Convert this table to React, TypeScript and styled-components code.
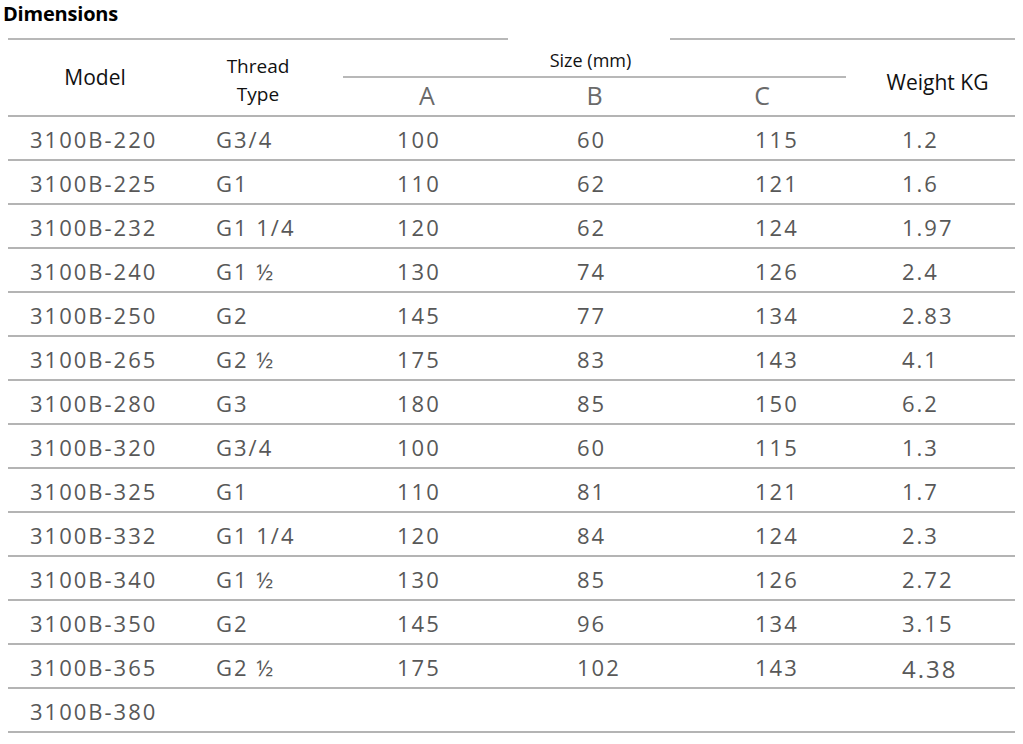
import React from "react";
import styled, { createGlobalStyle } from "styled-components";

const Global = createGlobalStyle`
  html, body { margin: 0; padding: 0; background: #fff; }
  body { font-family: "Open Sans", "Liberation Sans", sans-serif; }
`;

const Page = styled.div`
  width: 1023px;
  height: 744px;
  overflow: hidden;
  background: #fff;
`;

const Title = styled.h1`
  margin: 0;
  padding: 1px 0 0 3px;
  height: 38px;
  box-sizing: border-box;
  font-size: 20px;
  font-weight: 700;
  color: #000;
  line-height: 26px;
  letter-spacing: -0.2px;
`;

const Table = styled.div`
  margin-left: 8px;
  width: 1007px;
`;

const TopRule = styled.div`
  display: flex;
  height: 2px;
`;

const RuleSeg = styled.div<{ $w?: number; $clear?: boolean }>`
  height: 2px;
  ${(p) => (p.$w ? `width: ${p.$w}px;` : "flex: 1;")}
  background: ${(p) => (p.$clear ? "transparent" : "#b8b8b8")};
`;

const Header = styled.div`
  display: flex;
  height: 75px;
  border-bottom: 2px solid #b4b4b4;
  box-sizing: content-box;
`;

const HeadCell = styled.div<{ $w: number; $pl?: number; $pt?: number; $pb?: number }>`
  width: ${(p) => p.$w}px;
  padding-left: ${(p) => p.$pl ?? 0}px;
  padding-top: ${(p) => p.$pt ?? 0}px;
  padding-bottom: ${(p) => p.$pb ?? 0}px;
  box-sizing: border-box;
  display: flex;
  flex-direction: column;
  align-items: center;
  justify-content: center;
  color: #111;
  font-size: 21px;
  line-height: 28px;
`;

const ThreadCell = styled(HeadCell)`
  font-size: 19px;
  line-height: 28px;
`;

const SizeGroup = styled.div`
  margin-left: 9px;
  width: 503px;
  display: flex;
  flex-direction: column;
`;

const SizeLabel = styled.div`
  height: 40px;
  border-bottom: 2px solid #b8b8b8;
  box-sizing: border-box;
  display: flex;
  align-items: center;
  justify-content: center;
  padding-right: 8px;
  padding-top: 4px;
  font-size: 18px;
  color: #111;
`;

const SubHeads = styled.div`
  flex: 1;
  display: grid;
  grid-template-columns: 1fr 1fr 1fr;
`;

const SubHead = styled.div`
  display: flex;
  align-items: center;
  justify-content: center;
  font-size: 25px;
  color: #6a6a6a;
  padding-bottom: 3px;
`;

const Row = styled.div`
  display: grid;
  grid-template-columns: 186px 181px 180px 178px 147px 135px;
  height: 42px;
  border-bottom: 2px solid #b4b4b4;
  box-sizing: content-box;
`;

const Cell = styled.div<{ $big?: boolean }>`
  padding-left: 22px;
  display: flex;
  align-items: center;
  font-size: ${(p) => (p.$big ? 24 : 22)}px;
  letter-spacing: 2px;
  color: #585858;
  padding-top: ${(p) => (p.$big ? 4 : 1)}px;
  white-space: nowrap;
`;

const rows: string[][] = [
  ["3100B-220", "G3/4", "100", "60", "115", "1.2"],
  ["3100B-225", "G1", "110", "62", "121", "1.6"],
  ["3100B-232", "G1 1/4", "120", "62", "124", "1.97"],
  ["3100B-240", "G1 ½", "130", "74", "126", "2.4"],
  ["3100B-250", "G2", "145", "77", "134", "2.83"],
  ["3100B-265", "G2 ½", "175", "83", "143", "4.1"],
  ["3100B-280", "G3", "180", "85", "150", "6.2"],
  ["3100B-320", "G3/4", "100", "60", "115", "1.3"],
  ["3100B-325", "G1", "110", "81", "121", "1.7"],
  ["3100B-332", "G1 1/4", "120", "84", "124", "2.3"],
  ["3100B-340", "G1 ½", "130", "85", "126", "2.72"],
  ["3100B-350", "G2", "145", "96", "134", "3.15"],
  ["3100B-365", "G2 ½", "175", "102", "143", "4.38"],
  ["3100B-380", "", "", "", "", ""],
];

export default function App() {
  return (
    <Page>
      <Global />
      <Title>Dimensions</Title>
      <Table>
        <TopRule>
          <RuleSeg $w={500} />
          <RuleSeg $w={162} $clear />
          <RuleSeg />
        </TopRule>
        <Header>
          <HeadCell $w={174} $pb={2}>Model</HeadCell>
          <ThreadCell $w={152} $pt={4}>
            <span>Thread</span>
            <span>Type</span>
          </ThreadCell>
          <SizeGroup>
            <SizeLabel>Size (mm)</SizeLabel>
            <SubHeads>
              <SubHead>A</SubHead>
              <SubHead>B</SubHead>
              <SubHead>C</SubHead>
            </SubHeads>
          </SizeGroup>
          <HeadCell $w={169} $pl={14} $pt={8}>
            Weight KG
          </HeadCell>
        </Header>
        {rows.map((r, i) => (
          <Row key={i}>
            {r.map((v, j) => (
              <Cell key={j} $big={v === "4.38"}>
                {v}
              </Cell>
            ))}
          </Row>
        ))}
      </Table>
    </Page>
  );
}
